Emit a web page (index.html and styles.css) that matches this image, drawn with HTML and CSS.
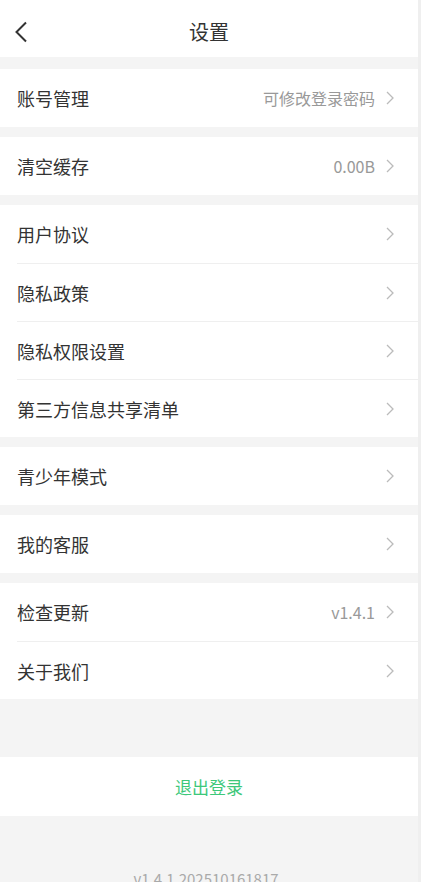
FILE: index.html
```html
<!DOCTYPE html>
<html lang="zh-CN">
<head>
<meta charset="utf-8">
<title>设置</title>
<link rel="stylesheet" href="styles.css">
</head>
<body>
<div class="page">
  <header class="nav">
    <span class="back">
      <svg width="14" height="22" viewBox="0 0 14 22"><path d="M12 1.5 L2.5 11 L12 20.5" fill="none" stroke="#333" stroke-width="2"/></svg>
    </span>
    <h1 class="title">设置</h1>
  </header>

  <section class="group">
    <div class="row"><span class="label">账号管理</span><span class="value">可修改登录密码</span><svg class="chev" width="8" height="14" viewBox="0 0 8 14"><path d="M1 1 L7 7 L1 13" fill="none" stroke="#bbb" stroke-width="1.3"/></svg></div>
  </section>

  <section class="group">
    <div class="row"><span class="label">清空缓存</span><span class="value">0.00B</span><svg class="chev" width="8" height="14" viewBox="0 0 8 14"><path d="M1 1 L7 7 L1 13" fill="none" stroke="#bbb" stroke-width="1.3"/></svg></div>
  </section>

  <section class="group">
    <div class="row"><span class="label">用户协议</span><svg class="chev" width="8" height="14" viewBox="0 0 8 14"><path d="M1 1 L7 7 L1 13" fill="none" stroke="#bbb" stroke-width="1.3"/></svg></div>
    <div class="row sep"><span class="label">隐私政策</span><svg class="chev" width="8" height="14" viewBox="0 0 8 14"><path d="M1 1 L7 7 L1 13" fill="none" stroke="#bbb" stroke-width="1.3"/></svg></div>
    <div class="row sep"><span class="label">隐私权限设置</span><svg class="chev" width="8" height="14" viewBox="0 0 8 14"><path d="M1 1 L7 7 L1 13" fill="none" stroke="#bbb" stroke-width="1.3"/></svg></div>
    <div class="row sep"><span class="label">第三方信息共享清单</span><svg class="chev" width="8" height="14" viewBox="0 0 8 14"><path d="M1 1 L7 7 L1 13" fill="none" stroke="#bbb" stroke-width="1.3"/></svg></div>
  </section>

  <section class="group">
    <div class="row"><span class="label">青少年模式</span><svg class="chev" width="8" height="14" viewBox="0 0 8 14"><path d="M1 1 L7 7 L1 13" fill="none" stroke="#bbb" stroke-width="1.3"/></svg></div>
  </section>

  <section class="group">
    <div class="row"><span class="label">我的客服</span><svg class="chev" width="8" height="14" viewBox="0 0 8 14"><path d="M1 1 L7 7 L1 13" fill="none" stroke="#bbb" stroke-width="1.3"/></svg></div>
  </section>

  <section class="group">
    <div class="row"><span class="label">检查更新</span><span class="value">v1.4.1</span><svg class="chev" width="8" height="14" viewBox="0 0 8 14"><path d="M1 1 L7 7 L1 13" fill="none" stroke="#bbb" stroke-width="1.3"/></svg></div>
    <div class="row sep"><span class="label">关于我们</span><svg class="chev" width="8" height="14" viewBox="0 0 8 14"><path d="M1 1 L7 7 L1 13" fill="none" stroke="#bbb" stroke-width="1.3"/></svg></div>
  </section>

  <div class="logout">退出登录</div>

  <div class="version">v1.4.1.202510161817</div>
</div>
</body>
</html>
```

FILE: styles.css
```css
html, body {
  margin: 0;
  padding: 0;
  background: #efefef;
}
body {
  font-family: "Noto Sans CJK SC", "Noto Sans", sans-serif;
  color: #333;
  height: 882px;
  overflow: hidden;
}
.page {
  width: 418px;
  height: 882px;
  background: #f4f4f4;
}
.nav {
  height: 57px;
  box-sizing: border-box;
  padding-top: 6px;
  background: #fff;
  display: flex;
  align-items: center;
  justify-content: center;
  position: relative;
  margin-bottom: 12px;
}
.back {
  position: absolute;
  left: 14px;
  top: 21px;
  display: flex;
}
.title {
  margin: 0;
  font-size: 20px;
  font-weight: 400;
  color: #333;
}
.group {
  background: #fff;
  margin-bottom: 10px;
}
.row {
  height: 58px;
  box-sizing: border-box;
  display: flex;
  align-items: center;
  padding: 0 24px 0 17px;
  margin: 0;
}
.row.sep {
  margin-left: 17px;
  padding-left: 0;
  border-top: 1px solid #efefef;
}
.label {
  flex: 1;
  font-size: 18px;
  color: #333;
}
.value {
  font-size: 16px;
  color: #999;
  margin-right: 11px;
}
.chev {
  display: block;
}
.logout {
  margin-top: 58px;
  height: 59px;
  background: #fff;
  display: flex;
  align-items: center;
  justify-content: center;
  color: #3dc87a;
  font-size: 17px;
}
.version {
  margin-top: 52px;
  text-align: center;
  font-size: 15px;
  color: #aaa;
  padding-right: 6px;
}
```
